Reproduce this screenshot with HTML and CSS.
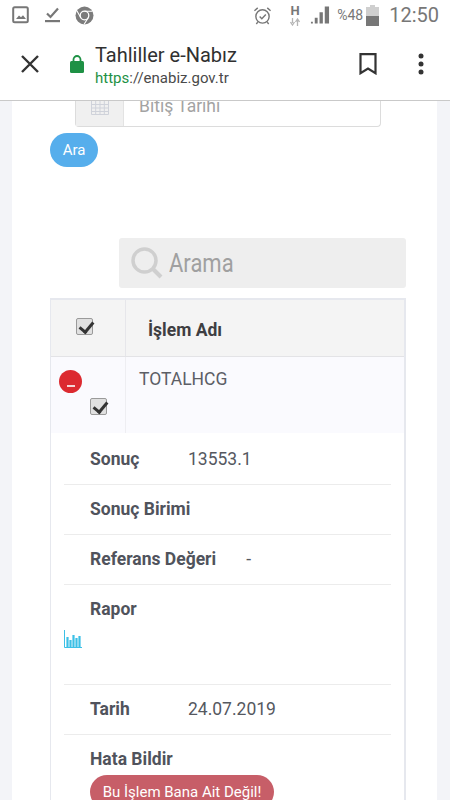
FILE: index.html
```html
<!DOCTYPE html>
<html lang="tr">
<head>
<meta charset="utf-8">
<title>Tahliller e-Nabız</title>
<link rel="stylesheet" href="styles.css">
</head>
<body>
<header class="chrome">
  <div class="status">
    <svg class="st-ic" width="18" height="18" viewBox="0 0 18 18"><rect x="1.2" y="1.2" width="14.6" height="15" rx="1.5" fill="none" stroke="#777" stroke-width="2"/><path d="M4 13l3-3.5 2 1.8 2-2 3 3.700z" fill="#777"/></svg>
    <svg class="st-ic st-check" width="18" height="18" viewBox="0 0 18 18"><path d="M3 7.500l3.500 3.500L14 2.500" fill="none" stroke="#777" stroke-width="2.200"/><rect x="1" y="14" width="15" height="2.200" fill="#777"/></svg>
    <svg class="st-ic st-chrome" width="19" height="19" viewBox="0 0 19 19"><circle cx="9.500" cy="9.500" r="9" fill="#7c7c7c"/><circle cx="9.500" cy="9.500" r="4.300" fill="#7c7c7c" stroke="#fff" stroke-width="1.300"/><path d="M9.500 5.200h8M5.800 11.700L2 5M13.200 11.700L9 18.500" stroke="#fff" stroke-width="1.100"/></svg>
    <span class="status-gap"></span>
    <svg class="st-alarm" width="19" height="19" viewBox="0 0 20 20"><circle cx="10" cy="11" r="7" fill="none" stroke="#777" stroke-width="1.500"/><path d="M7 11l2.300 2.300L13.500 9M1.500 5L5 2M18.500 5L15 2M5 17l-1.500 2M15 17l1.500 2" fill="none" stroke="#777" stroke-width="1.500"/></svg>
    <span class="net"><b>H</b><svg width="10" height="8" viewBox="0 0 10 8"><path d="M2.500 0v5M0.500 4l2 3 2-3M7.500 8V3M5.500 4l2-3 2 3" fill="none" stroke="#b5b5b5" stroke-width="1.300"/></svg></span>
    <svg class="st-signal" width="20" height="20" viewBox="0 0 21 20"><path d="M1 19h2v-2H1zM5 19h3v-6H5zM10 19h3.500V7H10zM15.500 19H20V1h-4.500z" fill="#777"/></svg>
    <span class="pct">%48</span>
    <svg class="st-batt" width="13" height="21" viewBox="0 0 13 21"><path d="M4 0h5v2h4v19H0V2h4z" fill="#cfcfcf"/><rect y="11" width="13" height="10" fill="#777"/></svg>
    <span class="clock">12:50</span>
  </div>
  <div class="toolbar">
    <svg class="close" width="20" height="20" viewBox="0 0 20 20"><path d="M2 2l16 16M18 2L2 18" stroke="#333" stroke-width="2.400"/></svg>
    <svg class="lock" width="14" height="19" viewBox="0 0 14 19"><path d="M3.500 8V5.500a3.500 3.500 0 0 1 7 0V8" fill="none" stroke="#1e9145" stroke-width="1.800"/><rect y="7" width="14" height="12" rx="1.500" fill="#1e9145"/></svg>
    <div class="title">
      <div class="title-main">Tahliller e-Nabız</div>
      <div class="title-url"><span class="https">https</span>://enabiz.gov.tr</div>
    </div>
    <svg class="bookmark" width="18" height="22" viewBox="0 0 18 22"><path d="M1.500 1.200h15v19L9 15.500 1.500 20.200z" fill="none" stroke="#333" stroke-width="2.200"/></svg>
    <svg class="menu" width="6" height="22" viewBox="0 0 6 22"><circle cx="3" cy="3" r="2.500" fill="#333"/><circle cx="3" cy="11" r="2.500" fill="#333"/><circle cx="3" cy="19" r="2.500" fill="#333"/></svg>
  </div>
</header>
<main class="page">
  <section class="card">
    <div class="date-group">
      <span class="addon">
        <svg width="18" height="14" viewBox="0 0 18 14"><path d="M.5 0v13.500h17V0M.5 3.500h17M.5 7h17M.5 10.500h17M4.700 0v13.500M9 0v13.500M13.300 0v13.500" fill="none" stroke="#cfd2da" stroke-width="1"/></svg>
      </span>
      <span class="date-input">Bitiş Tarihi</span>
    </div>
    <button class="ara" type="button">Ara</button>
    <div class="search">
      <svg width="32" height="32" viewBox="0 0 32 32"><circle cx="13.500" cy="13.500" r="11.500" fill="none" stroke="#cfcfcf" stroke-width="3.500"/><path d="M22 22l8 8" stroke="#cfcfcf" stroke-width="4"/></svg>
      <span>Arama</span>
    </div>
    <div class="table">
      <div class="thead">
        <div class="th-check"><span class="cb"></span></div>
        <div class="th-name">İşlem Adı</div>
      </div>
      <div class="trow">
        <div class="tr-icons">
          <span class="minus"><i></i></span>
          <span class="cb cb-row"></span>
        </div>
        <div class="tr-name">TOTALHCG</div>
      </div>
      <div class="details">
        <div class="drow"><b>Sonuç</b><span>13553.1</span></div>
        <div class="drow"><b>Sonuç Birimi</b></div>
        <div class="drow"><b class="b-wide">Referans Değeri</b><span>-</span></div>
        <div class="drow drow-tall"><b>Rapor</b>
          <svg class="chart" width="18" height="18" viewBox="0 0 18 18"><path d="M.5 0v17.500H18" fill="none" stroke="#3cc0e6" stroke-width="1"/><path d="M3.500 7v10M6.500 10v7M9.500 5v12M12.500 8v9M15.500 6v11" stroke="#3cc0e6" stroke-width="2.200"/></svg>
        </div>
        <div class="drow"><b>Tarih</b><span>24.07.2019</span></div>
        <div class="drow drow-last"><b>Hata Bildir</b>
          <button class="report" type="button">Bu İşlem Bana Ait Değil!</button>
        </div>
      </div>
    </div>
  </section>
</main>
</body>
</html>
```
FILE: styles.css
```css
* { box-sizing: border-box; }
html, body { margin: 0; padding: 0; }
body {
  width: 450px;
  height: 800px;
  overflow: hidden;
  background: #f3f4f8;
  font-family: Roboto, "Liberation Sans", sans-serif;
  color: #555860;
}
.chrome {
  height: 101px;
  background: #fff;
  border-bottom: 1px solid #c9c9c9;
}
.status {
  height: 32px;
  display: flex;
  align-items: center;
  padding: 0 11px 2px 12px;
}
.st-check { margin-left: 14px; }
.st-chrome { margin-left: 13px; }
.status-gap { flex: 1; }
.st-alarm { margin-right: 17px; }
.net {
  width: 12px;
  margin-right: 9px;
  display: flex;
  flex-direction: column;
  align-items: center;
  gap: 2px;
  color: #777;
  line-height: 11px;
}
.net b { font-size: 13px; }
.st-signal { margin-right: 7px; }
.pct { font-size: 14px; color: #777; margin-right: 3px; }
.st-batt { margin-right: 10px; }
.clock { font-size: 20px; color: #777; }
.toolbar {
  height: 68px;
  display: flex;
  align-items: center;
  padding: 0 26px 1px 20px;
}
.close, .lock, .bookmark, .menu { margin-top: -4px; flex: none; }
.lock { margin-left: 30px; }
.title { margin-left: 11px; flex: 1; }
.title-main { font-size: 20px; line-height: 24px; color: #303030; }
.title-url { font-size: 15px; line-height: 21px; padding-top: 1px; color: #4a4a4a; }
.https { color: #1e9145; }
.bookmark { margin-right: 41px; }
.page {
  margin: 0 13px 0 12px;
  height: 699px;
  background: #fff;
  overflow: hidden;
}
.date-group {
  margin: 0 0 0 63px;
  width: 306px;
  height: 26px;
  display: flex;
  border: 1px solid #dcdcdc;
  border-top: 0;
  border-radius: 0 0 4px 4px;
}
.addon {
  width: 48px;
  background: #f0f0f0;
  border-right: 1px solid #e3e3e3;
  display: flex;
  justify-content: center;
  align-items: flex-start;
}
.date-input {
  padding-left: 15px;
  font-size: 17.500px;
  line-height: 11px;
  color: #a3a3a3;
}
.ara {
  display: block;
  margin: 6px 0 0 38px;
  width: 48px;
  height: 34px;
  padding: 0;
  border: 0;
  border-radius: 17px;
  background: #56aeec;
  color: #fff;
  font: 15px Roboto, sans-serif;
}
.search {
  margin: 71px 0 0 107px;
  width: 287px;
  height: 50px;
  background: #eeeeee;
  border-radius: 3px;
  display: flex;
  align-items: center;
  padding: 0 12px;
  gap: 6px;
  font-size: 25px;
  font-weight: 400;
  color: #a0a0a0;
}
.search span { display: inline-block; transform: scaleX(.88); transform-origin: left; }
.table {
  margin: 10px 0 0 38px;
  width: 356px;
  height: 520px;
  border: 1px solid #e6e8ee;
  border-width: 2px 2px 0 1px;
}
.thead {
  display: flex;
  height: 57px;
  background: #f4f4f4;
  border-bottom: 1px solid #e3e3e6;
}
.th-check {
  width: 75px;
  border-right: 1px solid #e6e6ea;
  padding: 18px 0 0 25px;
}
.th-name {
  padding: 21px 0 0 22px;
  font-size: 17.500px;
  font-weight: 700;
  line-height: 19px;
  color: #3e3e42;
}
.cb {
  display: block;
  width: 17px;
  height: 17px;
  border: 1px solid #9a9a9a;
  border-radius: 2px;
  background: #e0e0e0;
  position: relative;
}
.cb::after {
  content: "";
  position: absolute;
  left: 4.500px;
  top: 0;
  width: 6px;
  height: 11px;
  border: solid #333;
  border-width: 0 3px 3px 0;
  transform: rotate(40deg);
}
.trow {
  display: flex;
  height: 76px;
  background: #fafafe;
}
.tr-icons {
  width: 75px;
  border-right: 1px solid #eeeef2;
  padding: 13px 0 0 8px;
}
.minus {
  display: flex;
  width: 23px;
  height: 23px;
  border-radius: 50%;
  background: #dc2a30;
  justify-content: center;
  align-items: flex-end;
  padding-bottom: 6px;
}
.minus i { width: 8px; height: 2px; background: #f4d6d6; }
.cb-row { margin: 5px 0 0 31px; }
.tr-name {
  padding: 13px 0 0 13px;
  font-size: 17.500px;
  line-height: 19px;
  color: #5c5e66;
}
.details { padding: 2px 13px 0; background: #fff; }
.drow {
  height: 50px;
  border-bottom: 1px solid #ececec;
  padding: 0 0 2px 26px;
  display: flex;
  align-items: center;
  font-size: 17.500px;
  color: #55585f;
}
.drow b { font-weight: 700; min-width: 98px; color: #50535c; }
.drow .b-wide { margin-right: 30px; }
.drow-tall {
  height: 100px;
  align-items: flex-start;
  padding-top: 14px;
  position: relative;
}
.chart { position: absolute; left: 0; top: 45px; }
.drow-last {
  display: block;
  border: 0;
  padding-top: 14px;
}
.drow-last b { display: block; line-height: 20px; }
.report {
  display: block;
  margin-top: 6px;
  width: 184px;
  height: 34px;
  padding: 0;
  border: 0;
  border-radius: 17px;
  background: #c75e68;
  color: #fff;
  font: 15px Roboto, sans-serif;
}
```
